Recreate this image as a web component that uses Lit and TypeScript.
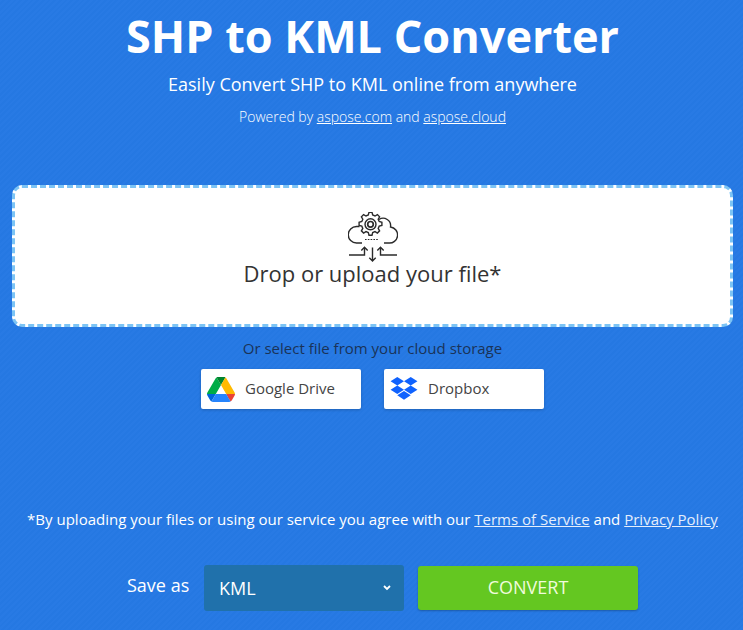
import { LitElement, html, css } from 'lit';
import { customElement } from 'lit/decorators.js';

@customElement('app-root')
export class AppRoot extends LitElement {
  static styles = css`
    :host {
      display: block;
      width: 743px;
      height: 630px;
      overflow: hidden;
      box-sizing: border-box;
      font-family: 'Open Sans', sans-serif;
      color: #fff;
      text-align: center;
      background-color: #2679e3;
      background-image: repeating-linear-gradient(
        135deg,
        #287ae4 0,
        #287ae4 2px,
        #2578e2 2px,
        #2578e2 4px
      );
    }

    a {
      color: #fff;
      text-decoration: underline;
    }

    h1 {
      margin: 0;
      padding: 5px 0 0 2px;
      font-size: 45px;
      line-height: 62px;
      font-weight: 700;
    }

    .sub {
      margin: 0;
      padding: 5px 0 0 2px;
      font-size: 18px;
      line-height: 25px;
    }

    .powered {
      margin: 0;
      padding: 10px 0 0 2px;
      font-size: 14px;
      line-height: 19px;
      font-weight: 300;
    }

    .drop {
      box-sizing: border-box;
      width: 721px;
      height: 142px;
      margin: 59px 0 0 12px;
      padding-top: 24px;
      background: #fff;
      border: 3px dashed #7cc4f5;
      border-radius: 10px;
      color: #333;
      font-size: 22px;
      line-height: 30px;
    }

    .drop svg {
      display: block;
      margin: 0 auto -4px;
    }

    .cloud-label {
      margin: 0;
      padding: 11px 0 0 2px;
      font-size: 15px;
      line-height: 20px;
      color: #1a3358;
    }

    .cloud {
      display: flex;
      justify-content: flex-start;
      gap: 23px;
      padding: 11px 0 0 201px;
    }

    .cloud-btn {
      box-sizing: border-box;
      display: flex;
      align-items: center;
      width: 160px;
      height: 40px;
      padding-left: 6px;
      gap: 10px;
      background: #fff;
      border-radius: 2px;
      color: #444;
      font-size: 15px;
      box-shadow: 0 1px 3px rgba(0, 0, 0, 0.2);
    }

    .cloud-btn span {
      margin-top: -3px;
    }

    .terms {
      margin: 0;
      padding: 100px 0 0 2px;
      font-size: 15px;
      line-height: 20px;
    }

    .terms a {
      color: #e4eefc;
    }

    .save {
      display: flex;
      align-items: center;
      padding: 36px 0 0 127px;
    }

    .save-label {
      width: 77px;
      text-align: left;
      font-size: 18px;
      margin-top: -6px;
    }

    .select {
      box-sizing: border-box;
      display: flex;
      align-items: center;
      justify-content: space-between;
      width: 200px;
      height: 46px;
      padding: 0 13px 0 15px;
      background: #2071ab;
      border-radius: 3px;
      font-size: 18px;
    }

    .convert {
      box-sizing: border-box;
      width: 220px;
      height: 44px;
      margin-left: 14px;
      padding: 0 0 3px;
      border: none;
      border-radius: 3px;
      background: #64c721;
      color: #f0fbdc;
      font-family: inherit;
      font-size: 18px;
      box-shadow: 0 1px 2px rgba(0, 0, 0, 0.25);
    }
  `;

  render() {
    return html`
      <h1>SHP to KML Converter</h1>
      <p class="sub">Easily Convert SHP to KML online from anywhere</p>
      <p class="powered">
        Powered by <a href="#">aspose.com</a> and <a href="#">aspose.cloud</a>
      </p>

      <div class="drop">
        <svg width="50" height="50" viewBox="0 0 50 50" fill="none" stroke="#2b2b2b" stroke-width="1.400">
          <path d="M14 31H8.500a7.700 7.700 0 0 1 0-16.500h3M31 7.500a7.500 7.500 0 0 1 11.500 7.500a8 8 0 0 1-2 16h-4.500" />
          <g transform="translate(-2.500 -0.700)">
            <path d="M23.500 1h3l.7 2.700l2.300 1l2.400-1.400l2.200 2.200l-1.400 2.400l1 2.300l2.700.7v3.200l-2.700.7l-1 2.300l1.400 2.400l-2.200 2.200l-2.400-1.400l-2.300 1l-.7 2.700h-3l-.7-2.700l-2.300-1l-2.400 1.400l-2.200-2.200l1.400-2.400l-1-2.300l-2.700-.7v-3.200l2.700-.7l1-2.300l-1.400-2.400l2.200-2.200l2.400 1.400l2.300-1z" fill="#fff" />
            <circle cx="25" cy="13" r="5.500" />
            <circle cx="25" cy="13" r="2.800" stroke-width="1.700" />
          </g>
          <path d="M17 27.500h14" stroke-dasharray="1.600 1.200" stroke-width="1.200" />
          <path d="M1 43h15.500v-7.500M13.300 38.500l3.200-3.200l3.200 3.200M49 43h-16.500v-7.500M29.300 38.500l3.200-3.200l3.200 3.200M24.500 35.500v13.500M21.300 45.800l3.200 3.200l3.200-3.200" stroke-width="1.400" />
        </svg>
        <div>Drop or upload your file*</div>
      </div>

      <p class="cloud-label">Or select file from your cloud storage</p>
      <div class="cloud">
        <div class="cloud-btn">
          <svg width="28" height="25" viewBox="0 0 87.300 78">
            <path d="m6.600 66.850 3.850 6.650c.8 1.400 1.950 2.500 3.300 3.300l13.750-23.800h-27.500c0 1.550.4 3.100 1.200 4.500z" fill="#0066da" />
            <path d="m43.650 25-13.750-23.800c-1.350.8-2.500 1.900-3.300 3.300l-25.400 44a9.060 9.060 0 0 0 -1.200 4.500h27.500z" fill="#00ac47" />
            <path d="m73.550 76.800c1.350-.8 2.500-1.900 3.300-3.300l1.600-2.750 7.650-13.250c.8-1.400 1.200-2.950 1.200-4.500h-27.502l5.852 11.500z" fill="#ea4335" />
            <path d="m43.650 25 13.750-23.800c-1.350-.8-2.900-1.200-4.500-1.200h-18.500c-1.600 0-3.150.45-4.500 1.200z" fill="#00832d" />
            <path d="m59.800 53h-32.300l-13.750 23.800c1.350.8 2.900 1.200 4.500 1.200h50.800c1.600 0 3.150-.45 4.500-1.200z" fill="#2684fc" />
            <path d="m73.400 26.500-12.700-22c-.8-1.400-1.950-2.500-3.300-3.300l-13.750 23.800 16.150 28h27.450c0-1.550-.4-3.100-1.200-4.500z" fill="#ffba00" />
          </svg>
          <span>Google Drive</span>
        </div>
        <div class="cloud-btn">
          <svg width="28" height="24" viewBox="0 0 28 25" fill="#0f62fe">
            <path d="M7 0l7 4.400l-7 4.400l-7-4.400zM21 0l7 4.400l-7 4.400l-7-4.400zM0 13.200l7-4.400l7 4.400l-7 4.400zM21 8.800l7 4.400l-7 4.400l-7-4.400zM7 19l7-4.400l7 4.400l-7 4.600z" />
          </svg>
          <span>Dropbox</span>
        </div>
      </div>

      <p class="terms">
        *By uploading your files or using our service you agree with our
        <a href="#">Terms of Service</a> and <a href="#">Privacy Policy</a>
      </p>

      <div class="save">
        <span class="save-label">Save as</span>
        <div class="select">
          <span>KML</span>
          <svg width="8" height="6" viewBox="0 0 8 6" fill="none" stroke="#fff" stroke-width="1.800">
            <path d="M1 1l3 3l3-3" />
          </svg>
        </div>
        <button class="convert">CONVERT</button>
      </div>
    `;
  }
}
